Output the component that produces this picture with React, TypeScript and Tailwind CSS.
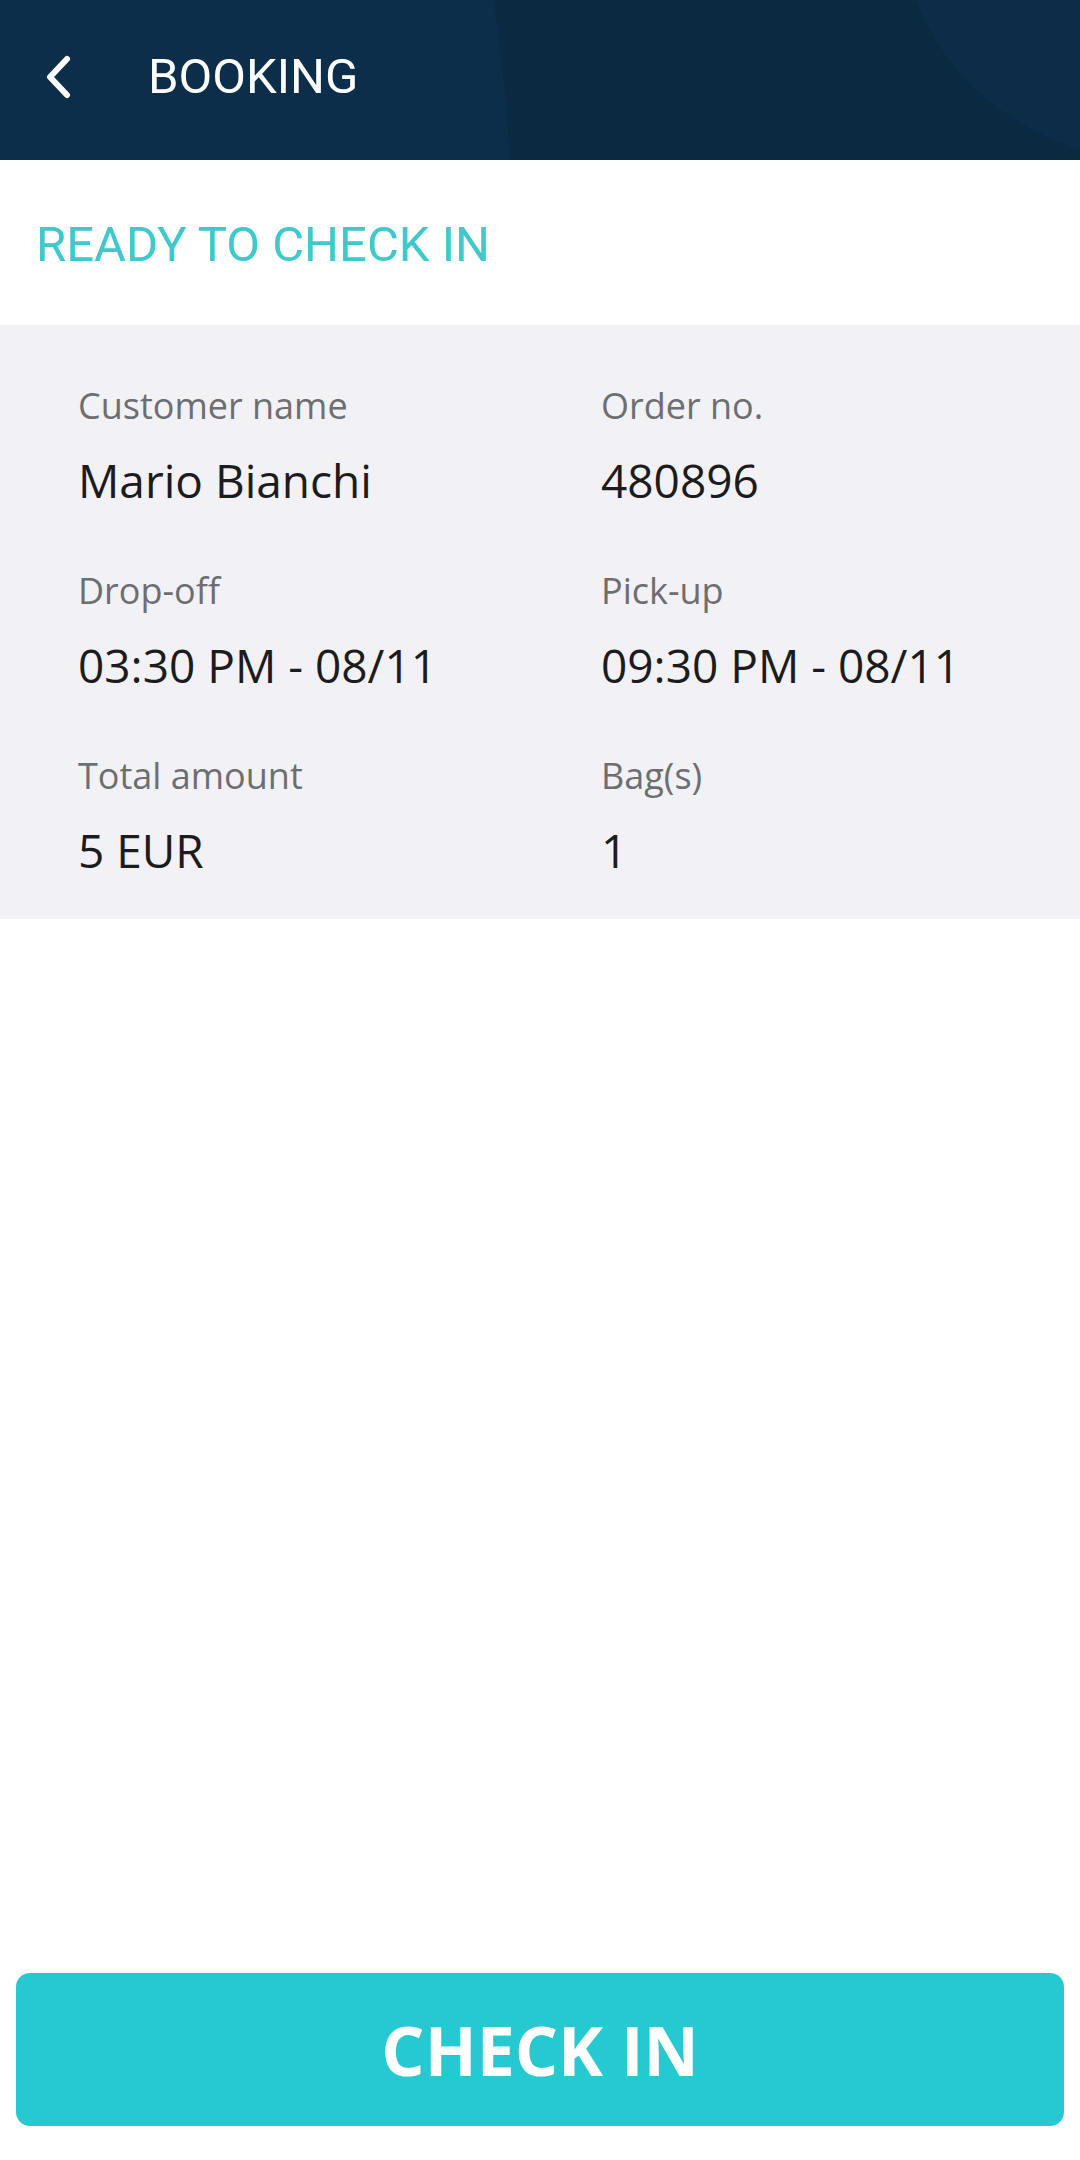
const details = [
	{ label: "Customer name", value: "Mario Bianchi" },
	{ label: "Order no.", value: "480896" },
	{ label: "Drop-off", value: "03:30 PM - 08/11" },
	{ label: "Pick-up", value: "09:30 PM - 08/11" },
	{ label: "Total amount", value: "5 EUR" },
	{ label: "Bag(s)", value: "1" },
];

const App = () => {
	return (
		<div className="flex flex-col min-h-[2160px] w-full bg-white font-['Open_Sans',sans-serif]">
			<header className="relative h-[160px] bg-[#0d2e4b] overflow-hidden flex items-center">
				{/* background shapes */}
				<svg
					className="absolute inset-0 w-full h-full"
					viewBox="0 0 1080 160"
					preserveAspectRatio="none"
				>
					<path d="M494 0 Q505 80 510 160 L1080 160 L1080 0 Z" fill="#0b2941" />
					<path d="M915 0 Q960 110 1080 150 L1080 0 Z" fill="#0c2c47" />
				</svg>
				<div className="relative flex items-center -mt-[6px]">
					<svg
						className="ml-[44px]"
						width="28"
						height="44"
						viewBox="0 0 28 44"
						fill="none"
					>
						<path
							d="M23 4 L6 22 L23 40"
							stroke="white"
							strokeWidth="6"
							strokeLinecap="round"
							strokeLinejoin="round"
						/>
					</svg>
					<h1 className="ml-[76px] text-white text-[49px] font-['Roboto',sans-serif]">
						BOOKING
					</h1>
				</div>
			</header>

			<div className="h-[165px] flex items-center px-[36px]">
				<h2 className="text-[#3ec9cc] text-[49px] font-['Roboto',sans-serif] mt-[4px]">
					READY TO CHECK IN
				</h2>
			</div>

			<section className="bg-[#f2f2f6] pt-[58px] pb-[42px] pl-[78px]">
				<div className="grid grid-cols-[523px_1fr] gap-y-[61px]">
					{details.map(({ label, value }) => (
						<div key={label} className="flex flex-col">
							<span className="text-[36px] leading-[46px] text-[#6d6e72]">
								{label}
							</span>
							<span className="mt-[24px] text-[46px] leading-[54px] text-[#1c1c1f]">
								{value}
							</span>
						</div>
					))}
				</div>
			</section>

			<div className="flex-1" />

			<div className="px-[16px] pb-[34px]">
				<button className="w-full h-[153px] rounded-[14px] bg-[#26c9cf] text-white text-[68px] font-bold flex items-center justify-center">
					CHECK IN
				</button>
			</div>
		</div>
	);
};

export default App;
